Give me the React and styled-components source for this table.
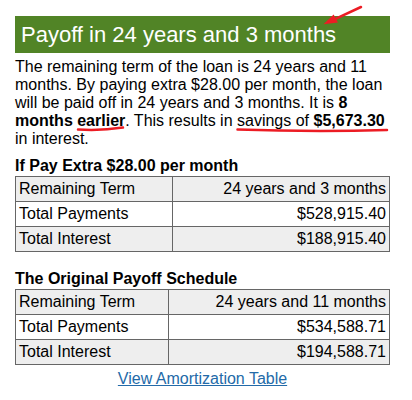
import styled, { createGlobalStyle } from "styled-components";

const GlobalStyle = createGlobalStyle`
  body {
    margin: 0;
    background: #fff;
    font-family: "Liberation Sans", Arial, sans-serif;
    color: #000;
  }
`;

const extraRows = [
  ["Remaining Term", "24 years and 3 months"],
  ["Total Payments", "$528,915.40"],
  ["Total Interest", "$188,915.40"],
];

const originalRows = [
  ["Remaining Term", "24 years and 11 months"],
  ["Total Payments", "$534,588.71"],
  ["Total Interest", "$194,588.71"],
];

function ResultTable({ rows }) {
  return (
    <Table>
      <tbody>
        {rows.map(([label, value], i) => (
          <Row key={label} shaded={i % 2 === 0}>
            <Cell>{label}</Cell>
            <Cell right>{value}</Cell>
          </Row>
        ))}
      </tbody>
    </Table>
  );
}

function Marks() {
  return (
    <Overlay width="412" height="400" viewBox="0 0 412 400">
      <g stroke="#ec1c24" strokeWidth="2.5" fill="none" strokeLinecap="round">
        <path d="M336 18.6 L361 7" />
        <path d="M78 129.5 Q100 131 123 127.6" />
        <path d="M237.5 129.5 Q312 132 387 130" />
      </g>
      <polygon points="323.5,24.2 338,22.6 333.6,14.6" fill="#ec1c24" />
    </Overlay>
  );
}

function App() {
  return (
    <Page>
      <GlobalStyle />
      <Header>Payoff in 24 years and 3 months</Header>
      <Summary>
        The remaining term of the loan is 24 years and 11 months. By paying
        extra $28.00 per month, the loan will be paid off in 24 years and 3
        months. It is <b>8 months earlier</b>. This results in savings of{" "}
        <b>$5,673.30</b> in interest.
      </Summary>
      <Caption>If Pay Extra $28.00 per month</Caption>
      <ResultTable rows={extraRows} />
      <Caption spaced>The Original Payoff Schedule</Caption>
      <ResultTable rows={originalRows} />
      <LinkRow>
        <Link href="#">View Amortization Table</Link>
      </LinkRow>
      <Marks />
    </Page>
  );
}
export default App;

const Page = styled.div`
  position: relative;
  width: 412px;
  height: 400px;
  box-sizing: border-box;
  padding: 16px 0 0 15px;
  overflow: hidden;
`;

const Header = styled.h2`
  width: 375px;
  box-sizing: border-box;
  margin: 0;
  padding: 6px 6px;
  background-color: #518426;
  color: #fff;
  font-size: 22px;
  font-weight: normal;
  line-height: 25px;
  white-space: nowrap;
`;

const Summary = styled.p`
  width: 375px;
  margin: 5px 0 0;
  font-size: 16px;
  line-height: 18px;
`;

const Caption = styled.div`
  margin-top: ${(props) => (props.spaced ? "18px" : "9px")};
  font-size: 16px;
  font-weight: bold;
  line-height: 18px;
`;

const Table = styled.table`
  width: 375px;
  margin-top: 1px;
  border-collapse: collapse;
  border-spacing: 0;
  font-size: 16px;
`;

const Row = styled.tr`
  background-color: ${(props) => (props.shaded ? "#eeeeee" : "#fff")};
`;

const Cell = styled.td`
  border: 1px solid #666;
  padding: 3px 3px;
  line-height: 18px;
  text-align: ${(props) => (props.right ? "right" : "left")};
  white-space: nowrap;
`;

const LinkRow = styled.div`
  width: 375px;
  margin-top: 5px;
  text-align: center;
  font-size: 16px;
  line-height: 18px;
`;

const Link = styled.a`
  color: #236aa8;
  text-decoration: underline;
`;

const Overlay = styled.svg`
  position: absolute;
  top: 0;
  left: 0;
  pointer-events: none;
`;
